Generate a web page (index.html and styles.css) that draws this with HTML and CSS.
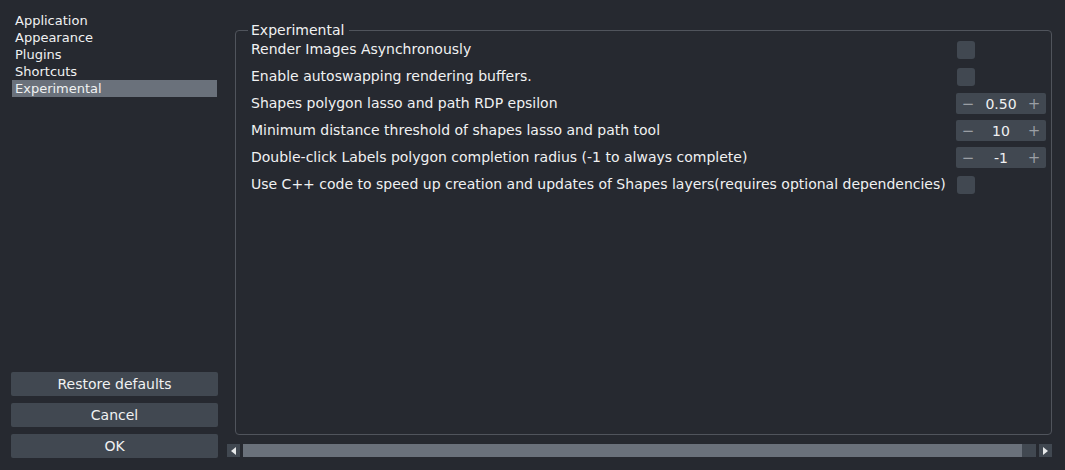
FILE: index.html
```html
<!DOCTYPE html>
<html>
<head>
<meta charset="utf-8">
<link rel="stylesheet" href="styles.css">
</head>
<body>
<div class="window">
  <div class="sidebar">
    <ul class="nav">
      <li class="nav-item">Application</li>
      <li class="nav-item">Appearance</li>
      <li class="nav-item">Plugins</li>
      <li class="nav-item">Shortcuts</li>
      <li class="nav-item selected">Experimental</li>
    </ul>
    <div class="buttons">
      <button class="btn">Restore defaults</button>
      <button class="btn">Cancel</button>
      <button class="btn">OK</button>
    </div>
  </div>
  <div class="main">
    <fieldset class="group">
      <legend class="group-title">Experimental</legend>
      <div class="form">
        <div class="label">Render Images Asynchronously</div>
        <div class="field"><span class="check"></span></div>
        <div class="label">Enable autoswapping rendering buffers.</div>
        <div class="field"><span class="check"></span></div>
        <div class="label">Shapes polygon lasso and path RDP epsilon</div>
        <div class="field"><div class="spin"><span class="sb">−</span><span class="sv">0.50</span><span class="sb">+</span></div></div>
        <div class="label">Minimum distance threshold of shapes lasso and path tool</div>
        <div class="field"><div class="spin"><span class="sb">−</span><span class="sv">10</span><span class="sb">+</span></div></div>
        <div class="label">Double-click Labels polygon completion radius (-1 to always complete)</div>
        <div class="field"><div class="spin"><span class="sb">−</span><span class="sv">-1</span><span class="sb">+</span></div></div>
        <div class="label">Use C++ code to speed up creation and updates of Shapes layers(requires optional dependencies)</div>
        <div class="field"><span class="check"></span></div>
      </div>
    </fieldset>
    <div class="hscroll">
      <div class="arrow"><span class="tri-left"></span></div>
      <div class="track"><div class="handle"></div></div>
      <div class="arrow"><span class="tri-right"></span></div>
    </div>
  </div>
</div>
</body>
</html>
```
FILE: styles.css
```css
html, body {
  margin: 0;
  padding: 0;
  background: #262930;
}
body {
  width: 1065px;
  height: 470px;
  overflow: hidden;
  font-family: "DejaVu Sans", sans-serif;
  color: #f0f1f2;
}
.window {
  display: flex;
  height: 470px;
}
.sidebar {
  width: 207px;
  padding: 12px 0 12px 11px;
  display: flex;
  flex-direction: column;
  justify-content: space-between;
}
.nav {
  list-style: none;
  margin: 0 1px;
  padding: 0;
  font-size: 13px;
}
.nav-item {
  height: 17px;
  line-height: 17px;
  padding-left: 3px;
}
.nav-item.selected {
  background: #6a717b;
}
.buttons {
  display: flex;
  flex-direction: column;
  gap: 7px;
}
.btn {
  height: 24px;
  border: 0;
  border-radius: 2px;
  background: #414851;
  color: #f0f1f2;
  font-family: "DejaVu Sans", sans-serif;
  font-size: 14px;
  padding: 0;
}
.main {
  margin-left: 9px;
  width: 825px;
  display: flex;
  flex-direction: column;
}
.group {
  margin: 22px 0 0 8px;
  height: 413px;
  box-sizing: border-box;
  border: 1px solid #50545c;
  border-radius: 4px;
  padding: 0 5px 0 15px;
  min-width: 0;
}
.group-title {
  font-size: 14px;
  padding: 0 5px 0 3px;
  margin-left: -3px;
  line-height: 16px;
}
.form {
  display: grid;
  grid-template-columns: 705px 90px;
  grid-auto-rows: 21px;
  row-gap: 6px;
  margin-top: 1px;
  font-size: 14px;
}
.label {
  line-height: 21px;
  white-space: nowrap;
}
.field {
  display: flex;
  align-items: center;
}
.check {
  width: 18px;
  height: 18px;
  margin-left: 1px;
  margin-top: 1px;
  border-radius: 3px;
  background: #414851;
}
.spin {
  width: 90px;
  height: 21px;
  border-radius: 2px;
  background: #414851;
  display: flex;
  align-items: center;
  justify-content: space-between;
  padding: 0 5px 0 5px;
  box-sizing: border-box;
  font-size: 14px;
}
.sb {
  color: #9a9ea4;
  width: 14px;
  text-align: center;
  font-size: 15px;
}
.sv {
  flex: 1;
  text-align: center;
}
.hscroll {
  margin-top: 9px;
  height: 13px;
  display: flex;
  gap: 3px;
}
.arrow {
  width: 13px;
  height: 13px;
  background: #414851;
  display: flex;
  align-items: center;
  justify-content: center;
}
.tri-left {
  width: 0;
  height: 0;
  border-top: 4px solid transparent;
  border-bottom: 4px solid transparent;
  border-right: 5px solid #e8e9ea;
}
.tri-right {
  width: 0;
  height: 0;
  border-top: 4px solid transparent;
  border-bottom: 4px solid transparent;
  border-left: 5px solid #e8e9ea;
}
.track {
  flex: 1;
  background: #414851;
}
.handle {
  width: 779px;
  height: 13px;
  background: #6a717b;
}
```
